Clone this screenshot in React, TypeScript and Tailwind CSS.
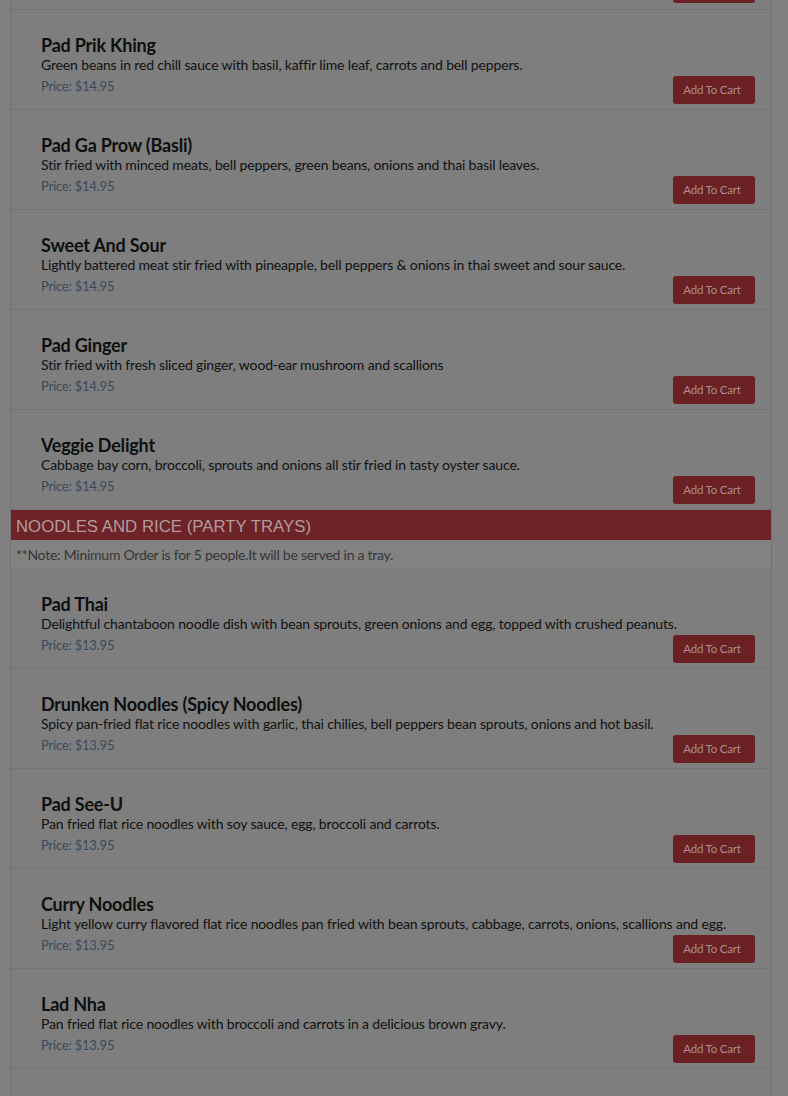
import React from "react";

type Item = { name: string; desc: string; price: string };

const curries: Item[] = [
  { name: "Pad Prik Khing", desc: "Green beans in red chill sauce with basil, kaffir lime leaf, carrots and bell peppers.", price: "$14.95" },
  { name: "Pad Ga Prow (Basli)", desc: "Stir fried with minced meats, bell peppers, green beans, onions and thai basil leaves.", price: "$14.95" },
  { name: "Sweet And Sour", desc: "Lightly battered meat stir fried with pineapple, bell peppers & onions in thai sweet and sour sauce.", price: "$14.95" },
  { name: "Pad Ginger", desc: "Stir fried with fresh sliced ginger, wood-ear mushroom and scallions", price: "$14.95" },
  { name: "Veggie Delight", desc: "Cabbage bay corn, broccoli, sprouts and onions all stir fried in tasty oyster sauce.", price: "$14.95" },
];

const noodles: Item[] = [
  { name: "Pad Thai", desc: "Delightful chantaboon noodle dish with bean sprouts, green onions and egg, topped with crushed peanuts.", price: "$13.95" },
  { name: "Drunken Noodles (Spicy Noodles)", desc: "Spicy pan-fried flat rice noodles with garlic, thai chilies, bell peppers bean sprouts, onions and hot basil.", price: "$13.95" },
  { name: "Pad See-U", desc: "Pan fried flat rice noodles with soy sauce, egg, broccoli and carrots.", price: "$13.95" },
  { name: "Curry Noodles", desc: "Light yellow curry flavored flat rice noodles pan fried with bean sprouts, cabbage, carrots, onions, scallions and egg.", price: "$13.95" },
  { name: "Lad Nha", desc: "Pan fried flat rice noodles with broccoli and carrots in a delicious brown gravy.", price: "$13.95" },
];

function Row({ item }: { item: Item }) {
  return (
    <div className="relative h-[100px] border-b border-[#737373] pl-[30px] pr-[16px] pt-[25px]">
      <div className="flex flex-col whitespace-nowrap">
        <div className="text-[18px] leading-[20px] font-bold text-[#0f0f0f] tracking-[-0.2px]">{item.name}</div>
        <div className="text-[14px] leading-[20px] text-[#111111] tracking-[-0.15px]">{item.desc}</div>
        <div className="text-[13px] leading-[22px] text-[#3a4a5d] tracking-[-0.2px]">Price: {item.price}</div>
      </div>
      <button className="absolute right-[16px] top-[66px] h-[28px] w-[82px] rounded-[3px] bg-[#6b2024] pl-[10px] pr-[14px] text-[11.5px] text-[#a88f91] tracking-[-0.2px] whitespace-nowrap">
        Add To Cart
      </button>
    </div>
  );
}

export default function App() {
  return (
    <div className="w-[788px] bg-[#808080] overflow-hidden h-[1096px] font-['Lato',sans-serif]">
      <div className="ml-[10px] w-[762px] border-x border-[#727272] bg-[#7e7e7e]">
        <div className="h-[10px] border-b border-[#737373] flex justify-end pr-[16px]">
          <div className="h-[3px] w-[82px] rounded-b-[3px] bg-[#6b2024]" />
        </div>
        {curries.map((it) => (
          <Row key={it.name} item={it} />
        ))}
        <div className="h-[30px] bg-[#6d2327] pl-[5px] pt-[7px] leading-[20px] font-['Liberation_Sans',sans-serif] text-[16.8px] text-[#b39b9d] whitespace-nowrap">
          NOODLES AND RICE (PARTY TRAYS)
        </div>
        <div className="h-[29px] bg-[#828282] pl-[5px] flex items-center text-[14px] text-[#363636] tracking-[-0.25px] whitespace-nowrap">
          **Note: Minimum Order is for 5 people.It will be served in a tray.
        </div>
        {noodles.map((it) => (
          <Row key={it.name} item={it} />
        ))}
        <div className="h-[60px]" />
      </div>
    </div>
  );
}
